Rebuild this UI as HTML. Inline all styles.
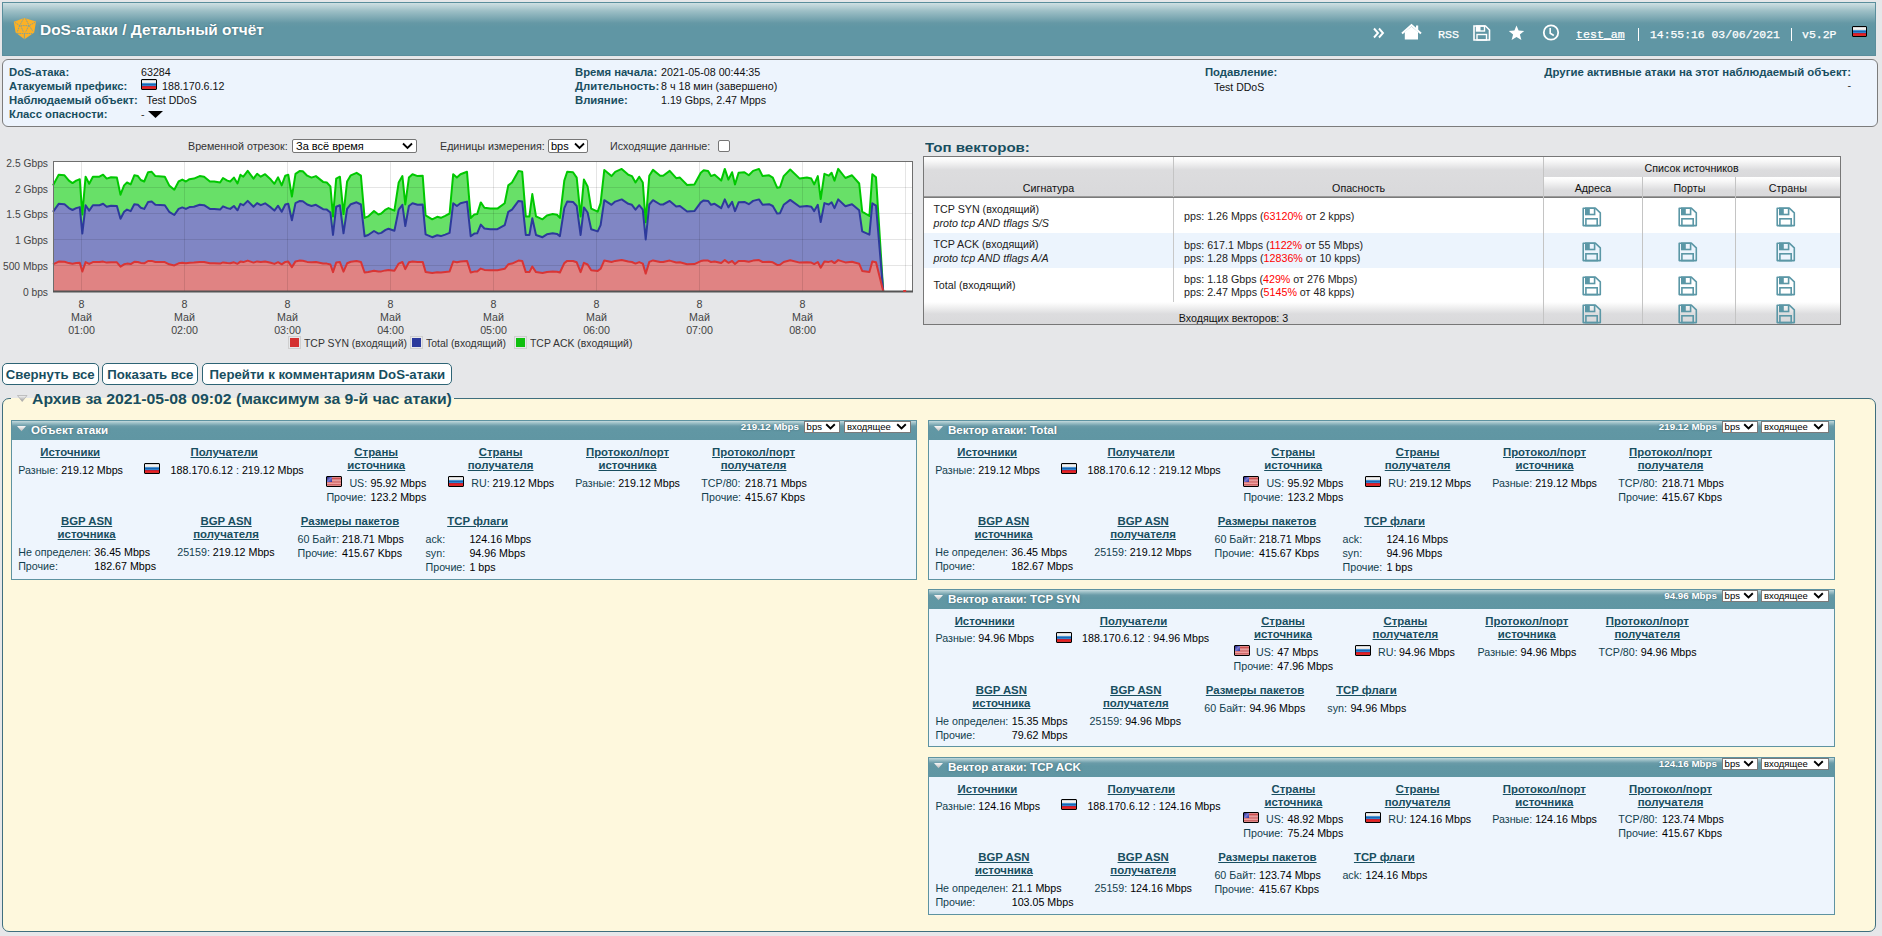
<!DOCTYPE html><html><head><meta charset='utf-8'><style>
html,body{margin:0;padding:0;}
body{width:1882px;height:936px;overflow:hidden;background:#e6e7e9;position:relative;font-family:"Liberation Sans",sans-serif;}
.t{position:absolute;white-space:nowrap;line-height:1;color:#2e2e2e;}
.h{color:#184e60;font-weight:bold;text-decoration:underline;text-underline-offset:1px;}
.lb{color:#184e60;font-weight:bold;}
.w{color:#fff;font-weight:bold;text-shadow:0 0 2px rgba(40,70,80,.6);}
.mono{font-family:"Liberation Mono",monospace;color:#fff;-webkit-text-stroke:0.25px #fff;}
svg{position:absolute;overflow:visible;}
</style></head><body><div style="position:absolute;left:2px;top:2px;width:1872px;height:52px;border:1px solid #5a8e9c;background:linear-gradient(#cfe0e3 0px,#9dbfc6 8px,#6598a5 20px,#6096a4 24px,#6096a4 100%);"></div>
<svg style="left:13px;top:17px" width="24" height="23" viewBox="0 0 24 23">
<polygon points="0.8,4.8 11.4,1 23,4.6 21.2,15.4 11.5,22.3 2.6,15.4" fill="#fdb125"/>
<g stroke="#7aa0a0" stroke-width="0.9" fill="none" stroke-dasharray="1.6 0.7">
<path d="M1.9,5.4 L6.6,8.6 L16.1,8.6 L22.3,5.2"/><path d="M10.6,1.5 L6.6,8.6 M12.5,1.5 L16.1,8.6"/>
<path d="M6.6,8.6 L4.1,15.4 M7.8,9 L10.6,15.4 M15.5,9 L12.5,15.4 M16.1,8.6 L20.1,14.6"/><path d="M4.1,16.5 L19,16.5"/><path d="M11.4,16.8 L11.4,22.3" stroke-dasharray="none"/>
</g></svg>
<div class="t w" style="left:40.0px;top:22.9px;font-size:14.2px;font-weight:bold;transform:scaleX(1.088);transform-origin:0 0;">DoS-атаки / Детальный отчёт</div>
<svg style="left:1373px;top:27px" width="12" height="12" viewBox="0 0 12 12">
<path d="M1,1.5 L5,6 L1,10.5 M6,1.5 L10,6 L6,10.5" stroke="#fff" stroke-width="1.9" fill="none"/></svg>
<svg style="left:1401px;top:24px" width="21" height="16" viewBox="0 0 21 16">
<path d="M1,9.5 L10.5,1 L20,9.5" stroke="#fff" stroke-width="2" fill="none"/>
<path d="M3.8,8 L10.5,2.5 L17,8 L17,15.5 L3.8,15.5 Z" fill="#fff"/><rect x="15" y="1.5" width="2.2" height="5" fill="#fff"/></svg>
<div class="t mono" style="left:1438.0px;top:30.0px;font-size:11.4px;transform:scaleX(1.03);transform-origin:0 0;">RSS</div>
<svg style="left:1473px;top:25px" width="18" height="16" viewBox="0 0 18 16">
<path d="M1,1 H12.5 L16.5,5 V15 H1 Z" stroke="#fff" stroke-width="1.6" fill="none"/>
<rect x="3.5" y="1" width="8" height="5" stroke="#fff" stroke-width="1.4" fill="none"/><rect x="3.5" y="1" width="4" height="5" fill="#fff"/>
<rect x="4" y="9.5" width="9.5" height="5.5" stroke="#fff" stroke-width="1.4" fill="none"/></svg>
<svg style="left:1508px;top:25px" width="17" height="16" viewBox="0 0 17 16">
<polygon points="8.5,0.6 10.6,5.6 16.2,5.9 11.9,9.5 13.4,15 8.5,11.9 3.6,15 5.1,9.5 0.8,5.9 6.4,5.6" fill="#fff"/></svg>
<svg style="left:1542px;top:24px" width="18" height="17" viewBox="0 0 18 17">
<circle cx="9" cy="8.5" r="7.2" stroke="#fff" stroke-width="1.8" fill="none"/>
<path d="M8.2,4 V9.2 L11.8,11.5" stroke="#fff" stroke-width="1.6" fill="none"/></svg>
<div class="t mono" style="left:1576.0px;top:30.0px;font-size:11.4px;transform:scaleX(1.02);transform-origin:0 0;"><span style="text-decoration:underline">test_am</span></div>
<div class="t mono" style="left:1650.0px;top:30.0px;font-size:11.4px;">14:55:16 03/06/2021</div>
<div class="t mono" style="left:1802.0px;top:30.0px;font-size:11.4px;transform:scaleX(1.01);transform-origin:0 0;">v5.2P</div>
<div style="position:absolute;left:1637.5px;top:28px;width:1.2px;height:13px;background:#fff;"></div>
<div style="position:absolute;left:1790.5px;top:28px;width:1.2px;height:13px;background:#fff;"></div>
<div style="position:absolute;left:1852px;top:26px;width:13px;height:9px;border:1px solid #000;border-radius:1px;background:linear-gradient(#b8b8b8 0%,#f8f8f8 12%,#e6e6e6 28%,#5aa0dc 36%,#0d5eae 52%,#3f8fd6 64%,#b02040 69%,#e41818 82%,#ff4a4a 90%,#9a0808 100%);"></div>
<div style="position:absolute;left:2px;top:59px;width:1874px;height:66px;border:1px solid #7c7c7c;border-radius:6px;background:#edf4fd;"></div>
<div class="t lb" style="left:9.0px;top:67.0px;font-size:11.3px;">DoS-атака:</div>
<div class="t lb" style="left:9.0px;top:81.0px;font-size:11.3px;">Атакуемый префикс:</div>
<div class="t lb" style="left:9.0px;top:95.0px;font-size:11.3px;">Наблюдаемый объект:</div>
<div class="t lb" style="left:9.0px;top:109.0px;font-size:11.3px;">Класс опасности:</div>
<div class="t" style="left:141.0px;top:67.0px;font-size:10.7px;color:#111;">63284</div>
<div style="position:absolute;left:141px;top:79px;width:14px;height:9px;border:1px solid #000;border-radius:1px;background:linear-gradient(#b8b8b8 0%,#f8f8f8 12%,#e6e6e6 28%,#5aa0dc 36%,#0d5eae 52%,#3f8fd6 64%,#b02040 69%,#e41818 82%,#ff4a4a 90%,#9a0808 100%);"></div>
<div class="t" style="left:162.0px;top:81.0px;font-size:10.7px;color:#111;">188.170.6.12</div>
<div class="t" style="left:146.5px;top:95.0px;font-size:10.5px;color:#111;">Test DDoS</div>
<div class="t" style="left:141.0px;top:109.0px;font-size:10.7px;">-</div>
<svg style="left:148px;top:111px" width="15" height="8"><polygon points="0,0 15,0 7.5,7" fill="#000"/></svg>
<div class="t lb" style="left:575.0px;top:66.5px;font-size:11.3px;">Время начала:</div>
<div class="t" style="left:661.0px;top:66.6px;font-size:10.7px;color:#111;">2021-05-08 00:44:35</div>
<div class="t lb" style="left:575.0px;top:80.7px;font-size:11.3px;">Длительность:</div>
<div class="t" style="left:661.0px;top:80.7px;font-size:10.7px;color:#111;">8 ч 18 мин (завершено)</div>
<div class="t lb" style="left:575.0px;top:94.7px;font-size:11.3px;">Влияние:</div>
<div class="t" style="left:661.0px;top:94.7px;font-size:10.7px;color:#111;">1.19 Gbps, 2.47 Mpps</div>
<div class="t lb" style="left:1205.0px;top:66.5px;font-size:11.3px;">Подавление:</div>
<div class="t" style="left:1214.0px;top:81.5px;font-size:10.5px;color:#111;">Test DDoS</div>
<div class="t lb" style="left:1851.0px;top:66.7px;font-size:11.3px;transform:translateX(-100%) scaleX(1.01);transform-origin:100% 0;">Другие активные атаки на этот наблюдаемый объект:</div>
<div class="t" style="left:1851.0px;top:80.0px;font-size:10.7px;transform:translateX(-100%);transform-origin:100% 0;">-</div>
<div class="t" style="left:188.0px;top:141.0px;font-size:10.7px;color:#333;">Временной отрезок:</div>
<div style="position:absolute;left:292px;top:139px;width:123px;height:12px;border:1px solid #767676;border-radius:2px;background:#fff;"></div>
<div class="t" style="left:296.0px;top:140.9px;font-size:11px;color:#000;">За всё время</div>
<svg style="left:402px;top:142px" width="11" height="8"><path d="M1,1.5 L5.5,6 L10,1.5" stroke="#000" stroke-width="1.8" fill="none"/></svg>
<div class="t" style="left:440.0px;top:141.0px;font-size:10.7px;color:#333;">Единицы измерения:</div>
<div style="position:absolute;left:548px;top:139px;width:38px;height:12px;border:1px solid #767676;border-radius:2px;background:#fff;"></div>
<div class="t" style="left:551.0px;top:140.9px;font-size:11px;color:#000;">bps</div>
<svg style="left:574px;top:142px" width="11" height="8"><path d="M1,1.5 L5.5,6 L10,1.5" stroke="#000" stroke-width="1.8" fill="none"/></svg>
<div class="t" style="left:610.0px;top:141.0px;font-size:10.7px;color:#333;">Исходящие данные:</div>
<div style="position:absolute;left:718px;top:140px;width:10px;height:10px;border:1px solid #767676;border-radius:2px;background:#fff;"></div>
<svg style="left:0;top:0" width="1882" height="936" viewBox="0 0 1882 936"><rect x="53" y="161" width="860" height="130" fill="#fff"/><path d="M53.0,185.4 L58.7,174.7 L64.5,175.3 L68.9,180.6 L72.5,183.1 L76.2,180.6 L79.8,179.2 L82.3,214.5 L85.6,176.7 L89.2,183.8 L92.9,176.7 L99.4,176.7 L103.1,174.7 L106.7,178.6 L111.0,177.3 L116.9,177.6 L120.5,194.7 L124.1,185.4 L127.0,182.5 L130.7,184.4 L134.3,175.3 L137.9,176.1 L140.8,180.0 L144.2,181.5 L148.1,172.2 L151.7,171.8 L155.4,176.1 L164.8,176.7 L169.2,185.4 L174.3,189.7 L178.6,181.5 L182.3,179.6 L185.9,181.5 L189.5,179.2 L193.9,178.6 L199.7,176.1 L204.1,176.7 L209.9,181.5 L214.2,181.5 L220.1,182.5 L223.0,178.0 L227.3,180.6 L230.2,181.5 L233.9,177.6 L237.5,183.5 L240.4,174.7 L243.3,176.7 L247.7,170.9 L253.5,178.6 L257.1,173.8 L260.8,176.7 L265.1,174.2 L270.8,179.6 L274.4,183.8 L278.1,177.3 L281.7,185.4 L285.3,175.7 L288.3,174.7 L291.9,196.6 L295.5,173.8 L299.9,170.9 L302.8,171.3 L307.2,175.7 L311.5,177.6 L315.9,176.1 L323.1,181.9 L326.8,182.5 L330.4,186.4 L333.0,216.4 L336.2,178.6 L339.9,176.7 L343.5,214.1 L347.1,181.5 L350.8,175.3 L356.6,172.8 L360.9,175.7 L364.6,217.9 L368.2,216.4 L374.0,211.0 L378.4,214.5 L381.3,213.5 L385.6,209.6 L388.5,208.1 L394.4,210.6 L398.7,182.5 L402.4,176.1 L405.3,204.4 L408.9,177.6 L412.5,174.2 L417.6,176.1 L422.7,175.7 L425.6,215.4 L432.2,219.3 L437.2,216.8 L440.9,217.8 L445.2,215.8 L449.6,213.5 L453.2,174.2 L456.9,177.6 L460.5,174.2 L467.0,171.8 L470.7,217.9 L474.3,214.5 L477.2,214.1 L480.8,202.4 L484.4,207.7 L490.2,208.6 L497.4,208.6 L504.7,203.2 L508.3,185.4 L512.0,182.5 L518.5,170.9 L522.2,171.8 L525.8,216.4 L529.4,216.4 L532.3,194.1 L536.0,216.4 L542.5,219.3 L546.9,215.4 L552.7,214.1 L557.0,214.8 L559.9,217.9 L564.3,180.6 L567.2,171.8 L573.0,172.2 L576.7,177.6 L580.6,216.4 L583.9,179.6 L587.6,186.4 L591.2,208.6 L597.7,211.6 L600.6,203.2 L604.3,169.9 L611.5,176.1 L615.2,171.8 L621.7,168.9 L628.3,174.7 L631.9,176.1 L635.5,182.5 L639.2,176.7 L642.8,182.5 L645.7,222.2 L649.3,175.7 L653.0,169.9 L660.2,175.7 L663.1,175.7 L669.7,170.9 L676.2,178.2 L679.9,177.6 L687.1,185.0 L694.4,184.4 L700.8,172.8 L703.7,170.3 L708.1,170.9 L711.0,176.1 L714.6,174.7 L721.2,180.6 L724.8,168.9 L728.4,179.6 L732.1,172.2 L735.0,184.4 L738.6,172.8 L744.4,172.2 L748.8,175.3 L753.1,170.9 L759.0,168.9 L762.6,176.1 L769.1,175.3 L772.8,177.6 L777.1,187.7 L780.0,187.3 L783.7,176.1 L790.2,169.5 L799.7,178.6 L806.9,177.6 L811.3,178.6 L814.2,184.4 L817.8,176.1 L820.7,199.0 L824.4,173.8 L828.7,175.7 L831.6,172.8 L834.5,180.6 L838.2,168.9 L845.4,178.0 L852.0,175.3 L859.2,183.5 L862.2,211.6 L869.4,216.0 L872.3,174.2 L876.0,177.3 L883.2,291 L53,291 Z" fill="#68e068"/><path d="M53.0,211.8 L58.7,203.8 L64.5,204.2 L68.9,208.1 L72.5,210.0 L76.2,208.1 L79.8,207.1 L82.3,233.6 L85.6,205.2 L89.2,210.6 L92.9,205.2 L99.4,205.2 L103.1,203.8 L106.7,206.7 L111.0,205.7 L116.9,206.0 L120.5,218.8 L124.1,211.8 L127.0,209.6 L130.7,211.1 L134.3,204.2 L137.9,204.8 L140.8,207.7 L144.2,208.9 L148.1,201.9 L151.7,201.6 L155.4,204.8 L164.8,205.2 L169.2,211.8 L174.3,215.0 L178.6,208.9 L182.3,207.4 L185.9,208.9 L189.5,207.1 L193.9,206.7 L199.7,204.8 L204.1,205.2 L209.9,208.9 L214.2,208.9 L220.1,209.6 L223.0,206.3 L227.3,208.1 L230.2,208.9 L233.9,206.0 L237.5,210.3 L240.4,203.8 L243.3,205.2 L247.7,200.9 L253.5,206.7 L257.1,203.1 L260.8,205.2 L265.1,203.3 L270.8,207.4 L274.4,210.6 L278.1,205.7 L281.7,211.8 L285.3,204.5 L288.3,203.8 L291.9,220.2 L295.5,203.1 L299.9,200.9 L302.8,201.2 L307.2,204.5 L311.5,206.0 L315.9,204.8 L323.1,209.2 L326.8,209.6 L330.4,212.5 L333.0,235.0 L336.2,206.7 L339.9,205.2 L343.5,233.3 L347.1,208.9 L350.8,204.2 L356.6,202.3 L360.9,204.5 L364.6,236.2 L368.2,235.0 L374.0,231.0 L378.4,233.6 L381.3,232.9 L385.6,229.9 L388.5,228.8 L394.4,230.7 L398.7,209.6 L402.4,204.8 L405.3,226.0 L408.9,206.0 L412.5,203.3 L417.6,204.8 L422.7,204.5 L425.6,234.3 L432.2,237.2 L437.2,235.3 L440.9,236.1 L445.2,234.6 L449.6,232.9 L453.2,203.3 L456.9,206.0 L460.5,203.3 L467.0,201.6 L470.7,236.2 L474.3,233.6 L477.2,233.3 L480.8,224.6 L484.4,228.5 L490.2,229.2 L497.4,229.2 L504.7,225.2 L508.3,211.8 L512.0,209.6 L518.5,200.9 L522.2,201.6 L525.8,235.0 L529.4,235.0 L532.3,218.3 L536.0,235.0 L542.5,237.2 L546.9,234.3 L552.7,233.3 L557.0,233.9 L559.9,236.2 L564.3,208.1 L567.2,201.6 L573.0,201.9 L576.7,206.0 L580.6,235.0 L583.9,207.4 L587.6,212.5 L591.2,229.2 L597.7,231.4 L600.6,225.2 L604.3,200.2 L611.5,204.8 L615.2,201.6 L621.7,199.4 L628.3,203.8 L631.9,204.8 L635.5,209.6 L639.2,205.2 L642.8,209.6 L645.7,239.4 L649.3,204.5 L653.0,200.2 L660.2,204.5 L663.1,204.5 L669.7,200.9 L676.2,206.4 L679.9,206.0 L687.1,211.5 L694.4,211.1 L700.8,202.3 L703.7,200.4 L708.1,200.9 L711.0,204.8 L714.6,203.8 L721.2,208.1 L724.8,199.4 L728.4,207.4 L732.1,201.9 L735.0,211.1 L738.6,202.3 L744.4,201.9 L748.8,204.2 L753.1,200.9 L759.0,199.4 L762.6,204.8 L769.1,204.2 L772.8,206.0 L777.1,213.5 L780.0,213.2 L783.7,204.8 L790.2,199.9 L799.7,206.7 L806.9,206.0 L811.3,206.7 L814.2,211.1 L817.8,204.8 L820.7,222.0 L824.4,203.1 L828.7,204.5 L831.6,202.3 L834.5,208.1 L838.2,199.4 L845.4,206.3 L852.0,204.2 L859.2,210.3 L862.2,231.4 L869.4,234.7 L872.3,203.3 L876.0,205.7 L883.2,291 L53,291 Z" fill="#8086c4"/><path d="M53.0,264.3 L58.7,261.6 L64.5,261.8 L68.9,263.1 L72.5,263.7 L76.2,263.1 L79.8,262.7 L82.3,271.6 L85.6,262.1 L89.2,263.9 L92.9,262.1 L99.4,262.1 L103.1,261.6 L106.7,262.6 L111.0,262.2 L116.9,262.3 L120.5,266.7 L124.1,264.3 L127.0,263.6 L130.7,264.1 L134.3,261.8 L137.9,262.0 L140.8,262.9 L144.2,263.3 L148.1,261.0 L151.7,260.9 L155.4,262.0 L164.8,262.1 L169.2,264.3 L174.3,265.4 L178.6,263.3 L182.3,262.8 L185.9,263.3 L189.5,262.7 L193.9,262.6 L199.7,262.0 L204.1,262.1 L209.9,263.3 L214.2,263.3 L220.1,263.6 L223.0,262.4 L227.3,263.1 L230.2,263.3 L233.9,262.3 L237.5,263.8 L240.4,261.6 L243.3,262.1 L247.7,260.6 L253.5,262.6 L257.1,261.4 L260.8,262.1 L265.1,261.5 L270.8,262.8 L274.4,263.9 L278.1,262.2 L281.7,264.3 L285.3,261.9 L288.3,261.6 L291.9,267.1 L295.5,261.4 L299.9,260.6 L302.8,260.7 L307.2,261.9 L311.5,262.3 L315.9,262.0 L323.1,263.4 L326.8,263.6 L330.4,264.5 L333.0,272.1 L336.2,262.6 L339.9,262.1 L343.5,271.6 L347.1,263.3 L350.8,261.8 L356.6,261.1 L360.9,261.9 L364.6,272.5 L368.2,272.1 L374.0,270.8 L378.4,271.6 L381.3,271.4 L385.6,270.4 L388.5,270.0 L394.4,270.7 L398.7,263.6 L402.4,262.0 L405.3,269.1 L408.9,262.3 L412.5,261.5 L417.6,262.0 L422.7,261.9 L425.6,271.9 L432.2,272.9 L437.2,272.2 L440.9,272.5 L445.2,272.0 L449.6,271.4 L453.2,261.5 L456.9,262.3 L460.5,261.5 L467.0,260.9 L470.7,272.5 L474.3,271.6 L477.2,271.6 L480.8,268.6 L484.4,269.9 L490.2,270.2 L497.4,270.2 L504.7,268.8 L508.3,264.3 L512.0,263.6 L518.5,260.6 L522.2,260.9 L525.8,272.1 L529.4,272.1 L532.3,266.5 L536.0,272.1 L542.5,272.9 L546.9,271.9 L552.7,271.6 L557.0,271.7 L559.9,272.5 L564.3,263.1 L567.2,260.9 L573.0,261.0 L576.7,262.3 L580.6,272.1 L583.9,262.8 L587.6,264.5 L591.2,270.2 L597.7,270.9 L600.6,268.8 L604.3,260.4 L611.5,262.0 L615.2,260.9 L621.7,260.1 L628.3,261.6 L631.9,262.0 L635.5,263.6 L639.2,262.1 L642.8,263.6 L645.7,273.6 L649.3,261.9 L653.0,260.4 L660.2,261.9 L663.1,261.9 L669.7,260.6 L676.2,262.5 L679.9,262.3 L687.1,264.2 L694.4,264.1 L700.8,261.1 L703.7,260.5 L708.1,260.6 L711.0,262.0 L714.6,261.6 L721.2,263.1 L724.8,260.1 L728.4,262.8 L732.1,261.0 L735.0,264.1 L738.6,261.1 L744.4,261.0 L748.8,261.8 L753.1,260.6 L759.0,260.1 L762.6,262.0 L769.1,261.8 L772.8,262.3 L777.1,264.9 L780.0,264.8 L783.7,262.0 L790.2,260.3 L799.7,262.6 L806.9,262.3 L811.3,262.6 L814.2,264.1 L817.8,262.0 L820.7,267.7 L824.4,261.4 L828.7,261.9 L831.6,261.1 L834.5,263.1 L838.2,260.1 L845.4,262.4 L852.0,261.8 L859.2,263.8 L862.2,270.9 L869.4,272.0 L872.3,261.5 L876.0,262.2 L883.2,291 L53,291 Z" fill="#e08383"/><path d="M53,187.5 H913 M53,213.5 H913 M53,239.5 H913 M53,265.5 H913 M81.5,161 V291 M184.5,161 V291 M287.5,161 V291 M390.5,161 V291 M493.5,161 V291 M596.5,161 V291 M699.5,161 V291 M802.5,161 V291 M905.5,161 V291" stroke="rgba(0,0,0,0.1)" stroke-width="1" fill="none"/><path d="M53.0,185.4 L58.7,174.7 L64.5,175.3 L68.9,180.6 L72.5,183.1 L76.2,180.6 L79.8,179.2 L82.3,214.5 L85.6,176.7 L89.2,183.8 L92.9,176.7 L99.4,176.7 L103.1,174.7 L106.7,178.6 L111.0,177.3 L116.9,177.6 L120.5,194.7 L124.1,185.4 L127.0,182.5 L130.7,184.4 L134.3,175.3 L137.9,176.1 L140.8,180.0 L144.2,181.5 L148.1,172.2 L151.7,171.8 L155.4,176.1 L164.8,176.7 L169.2,185.4 L174.3,189.7 L178.6,181.5 L182.3,179.6 L185.9,181.5 L189.5,179.2 L193.9,178.6 L199.7,176.1 L204.1,176.7 L209.9,181.5 L214.2,181.5 L220.1,182.5 L223.0,178.0 L227.3,180.6 L230.2,181.5 L233.9,177.6 L237.5,183.5 L240.4,174.7 L243.3,176.7 L247.7,170.9 L253.5,178.6 L257.1,173.8 L260.8,176.7 L265.1,174.2 L270.8,179.6 L274.4,183.8 L278.1,177.3 L281.7,185.4 L285.3,175.7 L288.3,174.7 L291.9,196.6 L295.5,173.8 L299.9,170.9 L302.8,171.3 L307.2,175.7 L311.5,177.6 L315.9,176.1 L323.1,181.9 L326.8,182.5 L330.4,186.4 L333.0,216.4 L336.2,178.6 L339.9,176.7 L343.5,214.1 L347.1,181.5 L350.8,175.3 L356.6,172.8 L360.9,175.7 L364.6,217.9 L368.2,216.4 L374.0,211.0 L378.4,214.5 L381.3,213.5 L385.6,209.6 L388.5,208.1 L394.4,210.6 L398.7,182.5 L402.4,176.1 L405.3,204.4 L408.9,177.6 L412.5,174.2 L417.6,176.1 L422.7,175.7 L425.6,215.4 L432.2,219.3 L437.2,216.8 L440.9,217.8 L445.2,215.8 L449.6,213.5 L453.2,174.2 L456.9,177.6 L460.5,174.2 L467.0,171.8 L470.7,217.9 L474.3,214.5 L477.2,214.1 L480.8,202.4 L484.4,207.7 L490.2,208.6 L497.4,208.6 L504.7,203.2 L508.3,185.4 L512.0,182.5 L518.5,170.9 L522.2,171.8 L525.8,216.4 L529.4,216.4 L532.3,194.1 L536.0,216.4 L542.5,219.3 L546.9,215.4 L552.7,214.1 L557.0,214.8 L559.9,217.9 L564.3,180.6 L567.2,171.8 L573.0,172.2 L576.7,177.6 L580.6,216.4 L583.9,179.6 L587.6,186.4 L591.2,208.6 L597.7,211.6 L600.6,203.2 L604.3,169.9 L611.5,176.1 L615.2,171.8 L621.7,168.9 L628.3,174.7 L631.9,176.1 L635.5,182.5 L639.2,176.7 L642.8,182.5 L645.7,222.2 L649.3,175.7 L653.0,169.9 L660.2,175.7 L663.1,175.7 L669.7,170.9 L676.2,178.2 L679.9,177.6 L687.1,185.0 L694.4,184.4 L700.8,172.8 L703.7,170.3 L708.1,170.9 L711.0,176.1 L714.6,174.7 L721.2,180.6 L724.8,168.9 L728.4,179.6 L732.1,172.2 L735.0,184.4 L738.6,172.8 L744.4,172.2 L748.8,175.3 L753.1,170.9 L759.0,168.9 L762.6,176.1 L769.1,175.3 L772.8,177.6 L777.1,187.7 L780.0,187.3 L783.7,176.1 L790.2,169.5 L799.7,178.6 L806.9,177.6 L811.3,178.6 L814.2,184.4 L817.8,176.1 L820.7,199.0 L824.4,173.8 L828.7,175.7 L831.6,172.8 L834.5,180.6 L838.2,168.9 L845.4,178.0 L852.0,175.3 L859.2,183.5 L862.2,211.6 L869.4,216.0 L872.3,174.2 L876.0,177.3 L883.2,291" stroke="#00c800" stroke-width="2" fill="none" stroke-linejoin="round"/><path d="M53.0,211.8 L58.7,203.8 L64.5,204.2 L68.9,208.1 L72.5,210.0 L76.2,208.1 L79.8,207.1 L82.3,233.6 L85.6,205.2 L89.2,210.6 L92.9,205.2 L99.4,205.2 L103.1,203.8 L106.7,206.7 L111.0,205.7 L116.9,206.0 L120.5,218.8 L124.1,211.8 L127.0,209.6 L130.7,211.1 L134.3,204.2 L137.9,204.8 L140.8,207.7 L144.2,208.9 L148.1,201.9 L151.7,201.6 L155.4,204.8 L164.8,205.2 L169.2,211.8 L174.3,215.0 L178.6,208.9 L182.3,207.4 L185.9,208.9 L189.5,207.1 L193.9,206.7 L199.7,204.8 L204.1,205.2 L209.9,208.9 L214.2,208.9 L220.1,209.6 L223.0,206.3 L227.3,208.1 L230.2,208.9 L233.9,206.0 L237.5,210.3 L240.4,203.8 L243.3,205.2 L247.7,200.9 L253.5,206.7 L257.1,203.1 L260.8,205.2 L265.1,203.3 L270.8,207.4 L274.4,210.6 L278.1,205.7 L281.7,211.8 L285.3,204.5 L288.3,203.8 L291.9,220.2 L295.5,203.1 L299.9,200.9 L302.8,201.2 L307.2,204.5 L311.5,206.0 L315.9,204.8 L323.1,209.2 L326.8,209.6 L330.4,212.5 L333.0,235.0 L336.2,206.7 L339.9,205.2 L343.5,233.3 L347.1,208.9 L350.8,204.2 L356.6,202.3 L360.9,204.5 L364.6,236.2 L368.2,235.0 L374.0,231.0 L378.4,233.6 L381.3,232.9 L385.6,229.9 L388.5,228.8 L394.4,230.7 L398.7,209.6 L402.4,204.8 L405.3,226.0 L408.9,206.0 L412.5,203.3 L417.6,204.8 L422.7,204.5 L425.6,234.3 L432.2,237.2 L437.2,235.3 L440.9,236.1 L445.2,234.6 L449.6,232.9 L453.2,203.3 L456.9,206.0 L460.5,203.3 L467.0,201.6 L470.7,236.2 L474.3,233.6 L477.2,233.3 L480.8,224.6 L484.4,228.5 L490.2,229.2 L497.4,229.2 L504.7,225.2 L508.3,211.8 L512.0,209.6 L518.5,200.9 L522.2,201.6 L525.8,235.0 L529.4,235.0 L532.3,218.3 L536.0,235.0 L542.5,237.2 L546.9,234.3 L552.7,233.3 L557.0,233.9 L559.9,236.2 L564.3,208.1 L567.2,201.6 L573.0,201.9 L576.7,206.0 L580.6,235.0 L583.9,207.4 L587.6,212.5 L591.2,229.2 L597.7,231.4 L600.6,225.2 L604.3,200.2 L611.5,204.8 L615.2,201.6 L621.7,199.4 L628.3,203.8 L631.9,204.8 L635.5,209.6 L639.2,205.2 L642.8,209.6 L645.7,239.4 L649.3,204.5 L653.0,200.2 L660.2,204.5 L663.1,204.5 L669.7,200.9 L676.2,206.4 L679.9,206.0 L687.1,211.5 L694.4,211.1 L700.8,202.3 L703.7,200.4 L708.1,200.9 L711.0,204.8 L714.6,203.8 L721.2,208.1 L724.8,199.4 L728.4,207.4 L732.1,201.9 L735.0,211.1 L738.6,202.3 L744.4,201.9 L748.8,204.2 L753.1,200.9 L759.0,199.4 L762.6,204.8 L769.1,204.2 L772.8,206.0 L777.1,213.5 L780.0,213.2 L783.7,204.8 L790.2,199.9 L799.7,206.7 L806.9,206.0 L811.3,206.7 L814.2,211.1 L817.8,204.8 L820.7,222.0 L824.4,203.1 L828.7,204.5 L831.6,202.3 L834.5,208.1 L838.2,199.4 L845.4,206.3 L852.0,204.2 L859.2,210.3 L862.2,231.4 L869.4,234.7 L872.3,203.3 L876.0,205.7 L883.2,291" stroke="#2d3a9c" stroke-width="2" fill="none" stroke-linejoin="round"/><path d="M53.0,264.3 L58.7,261.6 L64.5,261.8 L68.9,263.1 L72.5,263.7 L76.2,263.1 L79.8,262.7 L82.3,271.6 L85.6,262.1 L89.2,263.9 L92.9,262.1 L99.4,262.1 L103.1,261.6 L106.7,262.6 L111.0,262.2 L116.9,262.3 L120.5,266.7 L124.1,264.3 L127.0,263.6 L130.7,264.1 L134.3,261.8 L137.9,262.0 L140.8,262.9 L144.2,263.3 L148.1,261.0 L151.7,260.9 L155.4,262.0 L164.8,262.1 L169.2,264.3 L174.3,265.4 L178.6,263.3 L182.3,262.8 L185.9,263.3 L189.5,262.7 L193.9,262.6 L199.7,262.0 L204.1,262.1 L209.9,263.3 L214.2,263.3 L220.1,263.6 L223.0,262.4 L227.3,263.1 L230.2,263.3 L233.9,262.3 L237.5,263.8 L240.4,261.6 L243.3,262.1 L247.7,260.6 L253.5,262.6 L257.1,261.4 L260.8,262.1 L265.1,261.5 L270.8,262.8 L274.4,263.9 L278.1,262.2 L281.7,264.3 L285.3,261.9 L288.3,261.6 L291.9,267.1 L295.5,261.4 L299.9,260.6 L302.8,260.7 L307.2,261.9 L311.5,262.3 L315.9,262.0 L323.1,263.4 L326.8,263.6 L330.4,264.5 L333.0,272.1 L336.2,262.6 L339.9,262.1 L343.5,271.6 L347.1,263.3 L350.8,261.8 L356.6,261.1 L360.9,261.9 L364.6,272.5 L368.2,272.1 L374.0,270.8 L378.4,271.6 L381.3,271.4 L385.6,270.4 L388.5,270.0 L394.4,270.7 L398.7,263.6 L402.4,262.0 L405.3,269.1 L408.9,262.3 L412.5,261.5 L417.6,262.0 L422.7,261.9 L425.6,271.9 L432.2,272.9 L437.2,272.2 L440.9,272.5 L445.2,272.0 L449.6,271.4 L453.2,261.5 L456.9,262.3 L460.5,261.5 L467.0,260.9 L470.7,272.5 L474.3,271.6 L477.2,271.6 L480.8,268.6 L484.4,269.9 L490.2,270.2 L497.4,270.2 L504.7,268.8 L508.3,264.3 L512.0,263.6 L518.5,260.6 L522.2,260.9 L525.8,272.1 L529.4,272.1 L532.3,266.5 L536.0,272.1 L542.5,272.9 L546.9,271.9 L552.7,271.6 L557.0,271.7 L559.9,272.5 L564.3,263.1 L567.2,260.9 L573.0,261.0 L576.7,262.3 L580.6,272.1 L583.9,262.8 L587.6,264.5 L591.2,270.2 L597.7,270.9 L600.6,268.8 L604.3,260.4 L611.5,262.0 L615.2,260.9 L621.7,260.1 L628.3,261.6 L631.9,262.0 L635.5,263.6 L639.2,262.1 L642.8,263.6 L645.7,273.6 L649.3,261.9 L653.0,260.4 L660.2,261.9 L663.1,261.9 L669.7,260.6 L676.2,262.5 L679.9,262.3 L687.1,264.2 L694.4,264.1 L700.8,261.1 L703.7,260.5 L708.1,260.6 L711.0,262.0 L714.6,261.6 L721.2,263.1 L724.8,260.1 L728.4,262.8 L732.1,261.0 L735.0,264.1 L738.6,261.1 L744.4,261.0 L748.8,261.8 L753.1,260.6 L759.0,260.1 L762.6,262.0 L769.1,261.8 L772.8,262.3 L777.1,264.9 L780.0,264.8 L783.7,262.0 L790.2,260.3 L799.7,262.6 L806.9,262.3 L811.3,262.6 L814.2,264.1 L817.8,262.0 L820.7,267.7 L824.4,261.4 L828.7,261.9 L831.6,261.1 L834.5,263.1 L838.2,260.1 L845.4,262.4 L852.0,261.8 L859.2,263.8 L862.2,270.9 L869.4,272.0 L872.3,261.5 L876.0,262.2 L883.2,291" stroke="#d93535" stroke-width="2" fill="none" stroke-linejoin="round"/><path d="M53.5,161 V291 M53,161.5 H913 M912.5,161 V291" stroke="#6e6e6e" stroke-width="1" fill="none"/><path d="M53,291.5 H913" stroke="#555" stroke-width="2" fill="none"/><rect x="903.2" y="290" width="3" height="2" fill="#d93535"/></svg>
<div class="t" style="left:48.0px;top:158.0px;font-size:10.7px;color:#444;transform:translateX(-100%) scaleX(0.96);transform-origin:100% 0;">2.5 Gbps</div>
<div class="t" style="left:48.0px;top:183.7px;font-size:10.7px;color:#444;transform:translateX(-100%) scaleX(0.96);transform-origin:100% 0;">2 Gbps</div>
<div class="t" style="left:48.0px;top:209.4px;font-size:10.7px;color:#444;transform:translateX(-100%) scaleX(0.96);transform-origin:100% 0;">1.5 Gbps</div>
<div class="t" style="left:48.0px;top:235.1px;font-size:10.7px;color:#444;transform:translateX(-100%) scaleX(0.96);transform-origin:100% 0;">1 Gbps</div>
<div class="t" style="left:48.0px;top:260.8px;font-size:10.7px;color:#444;transform:translateX(-100%) scaleX(0.96);transform-origin:100% 0;">500 Mbps</div>
<div class="t" style="left:48.0px;top:286.5px;font-size:10.7px;color:#444;transform:translateX(-100%) scaleX(0.96);transform-origin:100% 0;">0 bps</div>
<div class="t" style="left:81.5px;top:299.0px;font-size:10.7px;color:#444;transform:translateX(-50%);transform-origin:50% 0;">8</div>
<div class="t" style="left:81.5px;top:312.0px;font-size:10.7px;color:#444;transform:translateX(-50%);transform-origin:50% 0;">Май</div>
<div class="t" style="left:81.5px;top:325.0px;font-size:10.7px;color:#444;transform:translateX(-50%);transform-origin:50% 0;">01:00</div>
<div class="t" style="left:184.5px;top:299.0px;font-size:10.7px;color:#444;transform:translateX(-50%);transform-origin:50% 0;">8</div>
<div class="t" style="left:184.5px;top:312.0px;font-size:10.7px;color:#444;transform:translateX(-50%);transform-origin:50% 0;">Май</div>
<div class="t" style="left:184.5px;top:325.0px;font-size:10.7px;color:#444;transform:translateX(-50%);transform-origin:50% 0;">02:00</div>
<div class="t" style="left:287.5px;top:299.0px;font-size:10.7px;color:#444;transform:translateX(-50%);transform-origin:50% 0;">8</div>
<div class="t" style="left:287.5px;top:312.0px;font-size:10.7px;color:#444;transform:translateX(-50%);transform-origin:50% 0;">Май</div>
<div class="t" style="left:287.5px;top:325.0px;font-size:10.7px;color:#444;transform:translateX(-50%);transform-origin:50% 0;">03:00</div>
<div class="t" style="left:390.5px;top:299.0px;font-size:10.7px;color:#444;transform:translateX(-50%);transform-origin:50% 0;">8</div>
<div class="t" style="left:390.5px;top:312.0px;font-size:10.7px;color:#444;transform:translateX(-50%);transform-origin:50% 0;">Май</div>
<div class="t" style="left:390.5px;top:325.0px;font-size:10.7px;color:#444;transform:translateX(-50%);transform-origin:50% 0;">04:00</div>
<div class="t" style="left:493.5px;top:299.0px;font-size:10.7px;color:#444;transform:translateX(-50%);transform-origin:50% 0;">8</div>
<div class="t" style="left:493.5px;top:312.0px;font-size:10.7px;color:#444;transform:translateX(-50%);transform-origin:50% 0;">Май</div>
<div class="t" style="left:493.5px;top:325.0px;font-size:10.7px;color:#444;transform:translateX(-50%);transform-origin:50% 0;">05:00</div>
<div class="t" style="left:596.5px;top:299.0px;font-size:10.7px;color:#444;transform:translateX(-50%);transform-origin:50% 0;">8</div>
<div class="t" style="left:596.5px;top:312.0px;font-size:10.7px;color:#444;transform:translateX(-50%);transform-origin:50% 0;">Май</div>
<div class="t" style="left:596.5px;top:325.0px;font-size:10.7px;color:#444;transform:translateX(-50%);transform-origin:50% 0;">06:00</div>
<div class="t" style="left:699.5px;top:299.0px;font-size:10.7px;color:#444;transform:translateX(-50%);transform-origin:50% 0;">8</div>
<div class="t" style="left:699.5px;top:312.0px;font-size:10.7px;color:#444;transform:translateX(-50%);transform-origin:50% 0;">Май</div>
<div class="t" style="left:699.5px;top:325.0px;font-size:10.7px;color:#444;transform:translateX(-50%);transform-origin:50% 0;">07:00</div>
<div class="t" style="left:802.5px;top:299.0px;font-size:10.7px;color:#444;transform:translateX(-50%);transform-origin:50% 0;">8</div>
<div class="t" style="left:802.5px;top:312.0px;font-size:10.7px;color:#444;transform:translateX(-50%);transform-origin:50% 0;">Май</div>
<div class="t" style="left:802.5px;top:325.0px;font-size:10.7px;color:#444;transform:translateX(-50%);transform-origin:50% 0;">08:00</div>
<div style="position:absolute;left:288px;top:336px;width:11px;height:11px;border:1px solid #cfcfcf;"></div>
<div style="position:absolute;left:290px;top:338px;width:9px;height:9px;background:#d43030;"></div>
<div class="t" style="left:304.0px;top:338.0px;font-size:10.7px;color:#333;transform:scaleX(0.975);transform-origin:0 0;">TCP SYN (входящий)</div>
<div style="position:absolute;left:410px;top:336px;width:11px;height:11px;border:1px solid #cfcfcf;"></div>
<div style="position:absolute;left:412px;top:338px;width:9px;height:9px;background:#2b3a9c;"></div>
<div class="t" style="left:426.0px;top:338.0px;font-size:10.7px;color:#333;transform:scaleX(0.975);transform-origin:0 0;">Total (входящий)</div>
<div style="position:absolute;left:514px;top:336px;width:11px;height:11px;border:1px solid #cfcfcf;"></div>
<div style="position:absolute;left:516px;top:338px;width:9px;height:9px;background:#0fbf0f;"></div>
<div class="t" style="left:530.0px;top:338.0px;font-size:10.7px;color:#333;transform:scaleX(0.975);transform-origin:0 0;">TCP ACK (входящий)</div>
<div class="t lb" style="left:925.0px;top:141.4px;font-size:13px;transform:scaleX(1.16);transform-origin:0 0;">Топ векторов:</div>
<div style="position:absolute;left:923px;top:156px;width:916px;height:167px;border:1px solid #777;background:#fff;"></div>
<div style="position:absolute;left:924px;top:157px;width:619px;height:40px;background:linear-gradient(#fff 0px,#f8f8f8 4px,#dcdcde 13px,#d9d9db 100%);"></div>
<div style="position:absolute;left:1544px;top:157px;width:296px;height:20px;background:linear-gradient(#fff 0px,#f8f8f8 4px,#dcdcde 13px,#d9d9db 100%);"></div>
<div style="position:absolute;left:1544px;top:177px;width:296px;height:20px;background:linear-gradient(#fff 0px,#f8f8f8 4px,#dcdcde 13px,#d9d9db 100%);"></div>
<div style="position:absolute;left:924px;top:197px;width:916px;height:1px;background:#7a7a7a;"></div>
<div style="position:absolute;left:924px;top:196px;width:916px;height:1px;background:#9a9a9a;"></div>
<div style="position:absolute;left:924px;top:233px;width:916px;height:35px;background:#ecf4fd;"></div>
<div style="position:absolute;left:924px;top:302px;width:916px;height:22px;background:linear-gradient(#fff 0px,#f4f4f4 4px,#dcdcde 12px,#d9d9db 100%);"></div>
<div style="position:absolute;left:1173px;top:157px;width:1px;height:40px;background:#c4c4c4;"></div>
<div style="position:absolute;left:1173px;top:198px;width:1px;height:104px;background:#c8c8c8;"></div>
<div style="position:absolute;left:1543px;top:157px;width:1px;height:167px;background:#c4c4c4;"></div>
<div style="position:absolute;left:1642px;top:177px;width:1px;height:147px;background:#c4c4c4;"></div>
<div style="position:absolute;left:1735px;top:177px;width:1px;height:147px;background:#c4c4c4;"></div>
<div class="t" style="left:1048.5px;top:183.0px;font-size:10.7px;color:#111;transform:translateX(-50%);transform-origin:50% 0;">Сигнатура</div>
<div class="t" style="left:1358.6px;top:183.0px;font-size:10.7px;color:#111;transform:translateX(-50%);transform-origin:50% 0;">Опасность</div>
<div class="t" style="left:1691.6px;top:163.3px;font-size:10.7px;color:#111;transform:translateX(-50%);transform-origin:50% 0;">Список источников</div>
<div class="t" style="left:1593.0px;top:183.0px;font-size:10.7px;color:#111;transform:translateX(-50%);transform-origin:50% 0;">Адреса</div>
<div class="t" style="left:1689.4px;top:183.0px;font-size:10.7px;color:#111;transform:translateX(-50%);transform-origin:50% 0;">Порты</div>
<div class="t" style="left:1787.8px;top:183.0px;font-size:10.7px;color:#111;transform:translateX(-50%);transform-origin:50% 0;">Страны</div>
<div class="t" style="left:933.5px;top:204.0px;font-size:10.7px;color:#222;">TCP SYN (входящий)</div>
<div class="t" style="left:933.5px;top:218.4px;font-size:10.7px;color:#222;font-style:italic;">proto tcp AND tflags S/S</div>
<div class="t" style="left:933.5px;top:239.0px;font-size:10.7px;color:#222;">TCP ACK (входящий)</div>
<div class="t" style="left:933.5px;top:253.2px;font-size:10.7px;color:#222;font-style:italic;">proto tcp AND tflags A/A</div>
<div class="t" style="left:933.5px;top:279.5px;font-size:10.7px;color:#222;">Total (входящий)</div>
<div class="t" style="left:1184.0px;top:210.5px;font-size:10.7px;color:#222;">pps: 1.26 Mpps (<span style="color:#f00">63120%</span> от 2 kpps)</div>
<div class="t" style="left:1184.0px;top:239.5px;font-size:10.7px;color:#222;">bps: 617.1 Mbps (<span style="color:#f00">1122%</span> от 55 Mbps)</div>
<div class="t" style="left:1184.0px;top:253.0px;font-size:10.7px;color:#222;">pps: 1.28 Mpps (<span style="color:#f00">12836%</span> от 10 kpps)</div>
<div class="t" style="left:1184.0px;top:273.8px;font-size:10.7px;color:#222;">bps: 1.18 Gbps (<span style="color:#f00">429%</span> от 276 Mbps)</div>
<div class="t" style="left:1184.0px;top:286.7px;font-size:10.7px;color:#222;">pps: 2.47 Mpps (<span style="color:#f00">5145%</span> от 48 kpps)</div>
<div class="t" style="left:1233.5px;top:313.0px;font-size:10.7px;color:#111;transform:translateX(-50%);transform-origin:50% 0;">Входящих векторов: 3</div>
<svg style="left:1582.3px;top:206.8px" width="20" height="20" viewBox="0 0 20 20">
<path d="M1.2,1.2 H13.3 L18.3,5.8 V18.6 H1.2 Z" stroke="#5b97a6" stroke-width="1.6" fill="none" stroke-linejoin="round"/>
<rect x="3.8" y="1.2" width="8.8" height="6.3" stroke="#5b97a6" stroke-width="1.6" fill="none"/>
<rect x="3.8" y="1.2" width="4" height="6.3" fill="#5b97a6"/>
<rect x="3.9" y="11.8" width="11.3" height="6.8" stroke="#5b97a6" stroke-width="1.6" fill="none"/></svg>
<svg style="left:1582.3px;top:241.8px" width="20" height="20" viewBox="0 0 20 20">
<path d="M1.2,1.2 H13.3 L18.3,5.8 V18.6 H1.2 Z" stroke="#5b97a6" stroke-width="1.6" fill="none" stroke-linejoin="round"/>
<rect x="3.8" y="1.2" width="8.8" height="6.3" stroke="#5b97a6" stroke-width="1.6" fill="none"/>
<rect x="3.8" y="1.2" width="4" height="6.3" fill="#5b97a6"/>
<rect x="3.9" y="11.8" width="11.3" height="6.8" stroke="#5b97a6" stroke-width="1.6" fill="none"/></svg>
<svg style="left:1582.3px;top:276.2px" width="20" height="20" viewBox="0 0 20 20">
<path d="M1.2,1.2 H13.3 L18.3,5.8 V18.6 H1.2 Z" stroke="#5b97a6" stroke-width="1.6" fill="none" stroke-linejoin="round"/>
<rect x="3.8" y="1.2" width="8.8" height="6.3" stroke="#5b97a6" stroke-width="1.6" fill="none"/>
<rect x="3.8" y="1.2" width="4" height="6.3" fill="#5b97a6"/>
<rect x="3.9" y="11.8" width="11.3" height="6.8" stroke="#5b97a6" stroke-width="1.6" fill="none"/></svg>
<svg style="left:1582.3px;top:303.6px" width="20" height="20" viewBox="0 0 20 20">
<path d="M1.2,1.2 H13.3 L18.3,5.8 V18.6 H1.2 Z" stroke="#5b97a6" stroke-width="1.6" fill="none" stroke-linejoin="round"/>
<rect x="3.8" y="1.2" width="8.8" height="6.3" stroke="#5b97a6" stroke-width="1.6" fill="none"/>
<rect x="3.8" y="1.2" width="4" height="6.3" fill="#5b97a6"/>
<rect x="3.9" y="11.8" width="11.3" height="6.8" stroke="#5b97a6" stroke-width="1.6" fill="none"/></svg>
<svg style="left:1678.4px;top:206.8px" width="20" height="20" viewBox="0 0 20 20">
<path d="M1.2,1.2 H13.3 L18.3,5.8 V18.6 H1.2 Z" stroke="#5b97a6" stroke-width="1.6" fill="none" stroke-linejoin="round"/>
<rect x="3.8" y="1.2" width="8.8" height="6.3" stroke="#5b97a6" stroke-width="1.6" fill="none"/>
<rect x="3.8" y="1.2" width="4" height="6.3" fill="#5b97a6"/>
<rect x="3.9" y="11.8" width="11.3" height="6.8" stroke="#5b97a6" stroke-width="1.6" fill="none"/></svg>
<svg style="left:1678.4px;top:241.8px" width="20" height="20" viewBox="0 0 20 20">
<path d="M1.2,1.2 H13.3 L18.3,5.8 V18.6 H1.2 Z" stroke="#5b97a6" stroke-width="1.6" fill="none" stroke-linejoin="round"/>
<rect x="3.8" y="1.2" width="8.8" height="6.3" stroke="#5b97a6" stroke-width="1.6" fill="none"/>
<rect x="3.8" y="1.2" width="4" height="6.3" fill="#5b97a6"/>
<rect x="3.9" y="11.8" width="11.3" height="6.8" stroke="#5b97a6" stroke-width="1.6" fill="none"/></svg>
<svg style="left:1678.4px;top:276.2px" width="20" height="20" viewBox="0 0 20 20">
<path d="M1.2,1.2 H13.3 L18.3,5.8 V18.6 H1.2 Z" stroke="#5b97a6" stroke-width="1.6" fill="none" stroke-linejoin="round"/>
<rect x="3.8" y="1.2" width="8.8" height="6.3" stroke="#5b97a6" stroke-width="1.6" fill="none"/>
<rect x="3.8" y="1.2" width="4" height="6.3" fill="#5b97a6"/>
<rect x="3.9" y="11.8" width="11.3" height="6.8" stroke="#5b97a6" stroke-width="1.6" fill="none"/></svg>
<svg style="left:1678.4px;top:303.6px" width="20" height="20" viewBox="0 0 20 20">
<path d="M1.2,1.2 H13.3 L18.3,5.8 V18.6 H1.2 Z" stroke="#5b97a6" stroke-width="1.6" fill="none" stroke-linejoin="round"/>
<rect x="3.8" y="1.2" width="8.8" height="6.3" stroke="#5b97a6" stroke-width="1.6" fill="none"/>
<rect x="3.8" y="1.2" width="4" height="6.3" fill="#5b97a6"/>
<rect x="3.9" y="11.8" width="11.3" height="6.8" stroke="#5b97a6" stroke-width="1.6" fill="none"/></svg>
<svg style="left:1776.4px;top:206.8px" width="20" height="20" viewBox="0 0 20 20">
<path d="M1.2,1.2 H13.3 L18.3,5.8 V18.6 H1.2 Z" stroke="#5b97a6" stroke-width="1.6" fill="none" stroke-linejoin="round"/>
<rect x="3.8" y="1.2" width="8.8" height="6.3" stroke="#5b97a6" stroke-width="1.6" fill="none"/>
<rect x="3.8" y="1.2" width="4" height="6.3" fill="#5b97a6"/>
<rect x="3.9" y="11.8" width="11.3" height="6.8" stroke="#5b97a6" stroke-width="1.6" fill="none"/></svg>
<svg style="left:1776.4px;top:241.8px" width="20" height="20" viewBox="0 0 20 20">
<path d="M1.2,1.2 H13.3 L18.3,5.8 V18.6 H1.2 Z" stroke="#5b97a6" stroke-width="1.6" fill="none" stroke-linejoin="round"/>
<rect x="3.8" y="1.2" width="8.8" height="6.3" stroke="#5b97a6" stroke-width="1.6" fill="none"/>
<rect x="3.8" y="1.2" width="4" height="6.3" fill="#5b97a6"/>
<rect x="3.9" y="11.8" width="11.3" height="6.8" stroke="#5b97a6" stroke-width="1.6" fill="none"/></svg>
<svg style="left:1776.4px;top:276.2px" width="20" height="20" viewBox="0 0 20 20">
<path d="M1.2,1.2 H13.3 L18.3,5.8 V18.6 H1.2 Z" stroke="#5b97a6" stroke-width="1.6" fill="none" stroke-linejoin="round"/>
<rect x="3.8" y="1.2" width="8.8" height="6.3" stroke="#5b97a6" stroke-width="1.6" fill="none"/>
<rect x="3.8" y="1.2" width="4" height="6.3" fill="#5b97a6"/>
<rect x="3.9" y="11.8" width="11.3" height="6.8" stroke="#5b97a6" stroke-width="1.6" fill="none"/></svg>
<svg style="left:1776.4px;top:303.6px" width="20" height="20" viewBox="0 0 20 20">
<path d="M1.2,1.2 H13.3 L18.3,5.8 V18.6 H1.2 Z" stroke="#5b97a6" stroke-width="1.6" fill="none" stroke-linejoin="round"/>
<rect x="3.8" y="1.2" width="8.8" height="6.3" stroke="#5b97a6" stroke-width="1.6" fill="none"/>
<rect x="3.8" y="1.2" width="4" height="6.3" fill="#5b97a6"/>
<rect x="3.9" y="11.8" width="11.3" height="6.8" stroke="#5b97a6" stroke-width="1.6" fill="none"/></svg>
<div style="position:absolute;left:2px;top:363px;width:94.5px;height:20px;border:1px solid #2d6475;border-radius:5px;background:#fff;"></div>
<div class="t lb" style="left:50.2px;top:367.7px;font-size:13.2px;transform:translateX(-50%);transform-origin:50% 0;">Свернуть все</div>
<div style="position:absolute;left:102.2px;top:363px;width:94.3px;height:20px;border:1px solid #2d6475;border-radius:5px;background:#fff;"></div>
<div class="t lb" style="left:150.3px;top:367.7px;font-size:13.2px;transform:translateX(-50%);transform-origin:50% 0;">Показать все</div>
<div style="position:absolute;left:202.4px;top:363px;width:247.9px;height:20px;border:1px solid #2d6475;border-radius:5px;background:#fff;"></div>
<div class="t lb" style="left:327.4px;top:367.7px;font-size:13.2px;transform:translateX(-50%);transform-origin:50% 0;">Перейти к комментариям DoS-атаки</div>
<div style="position:absolute;left:2px;top:398px;width:1872px;height:532px;border:1px solid #3f6f7e;border-radius:7px;background:#fef8dd;"></div>
<div style="position:absolute;left:11px;top:390px;width:443px;height:8px;background:#e6e7e9;"></div>
<div style="position:absolute;left:11px;top:398px;width:443px;height:3px;background:#fef8dd;"></div>
<svg style="left:17px;top:395px" width="11" height="7"><defs><linearGradient id="tg" x1="0" y1="0" x2="0" y2="1"><stop offset="0" stop-color="#f6f6f6"/><stop offset="1" stop-color="#9a9a9a"/></linearGradient></defs><polygon points="0.5,0.5 10,0.5 5.2,6.5" fill="url(#tg)" stroke="#aaaaaa" stroke-width="0.7"/></svg>
<div class="t lb" style="left:32.0px;top:392.1px;font-size:14px;transform:scaleX(1.127);transform-origin:0 0;">Архив за 2021-05-08 09:02 (максимум за 9-й час атаки)</div>
<div style="position:absolute;left:11px;top:420px;width:904px;height:158px;border:1px solid #5e93a1;background:#eef5fd;"></div>
<div style="position:absolute;left:12px;top:421px;width:904px;height:19px;background:linear-gradient(#c3d9dd 0px,#9dc0c7 2px,#6a9ba8 5px,#6197a4 8px,#6096a3 100%);"></div>
<svg style="left:16.5px;top:426px" width="10" height="6"><defs><linearGradient id="tg2" x1="0" y1="0" x2="0" y2="1"><stop offset="0" stop-color="#fafafa"/><stop offset="1" stop-color="#b8b8b8"/></linearGradient></defs><polygon points="0,0 9,0 4.5,5.3" fill="url(#tg2)"/></svg>
<div class="t w" style="left:30.5px;top:424.8px;font-size:10.5px;transform:scaleX(1.104);transform-origin:0 0;">Объект атаки</div>
<div class="t w" style="left:799.3px;top:422.1px;font-size:9.5px;transform:translateX(-100%) scaleX(1.03);transform-origin:100% 0;">219.12 Mbps</div>
<div style="position:absolute;left:803.8px;top:421.2px;width:34.2px;height:9.6px;border:1px solid #7a7a7a;background:#fff;"></div>
<div class="t" style="left:806.6px;top:422.2px;font-size:9.5px;color:#000;">bps</div>
<svg style="left:824.5px;top:423.2px" width="11" height="7"><path d="M1.2,1.2 L5.5,5.4 L9.8,1.2" stroke="#000" stroke-width="1.9" fill="none"/></svg>
<div style="position:absolute;left:844.2px;top:421.2px;width:65.2px;height:9.6px;border:1px solid #7a7a7a;background:#fff;"></div>
<div class="t" style="left:847.0px;top:422.2px;font-size:9.5px;color:#000;">входящее</div>
<svg style="left:895.9px;top:423.2px" width="11" height="7"><path d="M1.2,1.2 L5.5,5.4 L9.8,1.2" stroke="#000" stroke-width="1.9" fill="none"/></svg>
<div class="t h" style="left:70.2px;top:447.0px;font-size:11.4px;transform:translateX(-50%);transform-origin:50% 0;">Источники</div>
<div class="t h" style="left:224.2px;top:447.0px;font-size:11.4px;transform:translateX(-50%);transform-origin:50% 0;">Получатели</div>
<div class="t h" style="left:376.2px;top:447.0px;font-size:11.4px;transform:translateX(-50%);transform-origin:50% 0;">Страны</div>
<div class="t h" style="left:376.2px;top:460.2px;font-size:11.4px;transform:translateX(-50%);transform-origin:50% 0;">источника</div>
<div class="t h" style="left:500.6px;top:447.0px;font-size:11.4px;transform:translateX(-50%);transform-origin:50% 0;">Страны</div>
<div class="t h" style="left:500.6px;top:460.2px;font-size:11.4px;transform:translateX(-50%);transform-origin:50% 0;">получателя</div>
<div class="t h" style="left:627.5px;top:447.0px;font-size:11.4px;transform:translateX(-50%);transform-origin:50% 0;">Протокол/порт</div>
<div class="t h" style="left:627.5px;top:460.2px;font-size:11.4px;transform:translateX(-50%);transform-origin:50% 0;">источника</div>
<div class="t h" style="left:753.6px;top:447.0px;font-size:11.4px;transform:translateX(-50%);transform-origin:50% 0;">Протокол/порт</div>
<div class="t h" style="left:753.6px;top:460.2px;font-size:11.4px;transform:translateX(-50%);transform-origin:50% 0;">получателя</div>
<div class="t h" style="left:86.6px;top:515.8px;font-size:11.4px;transform:translateX(-50%);transform-origin:50% 0;">BGP ASN</div>
<div class="t h" style="left:86.6px;top:529.0px;font-size:11.4px;transform:translateX(-50%);transform-origin:50% 0;">источника</div>
<div class="t h" style="left:226.1px;top:515.8px;font-size:11.4px;transform:translateX(-50%);transform-origin:50% 0;">BGP ASN</div>
<div class="t h" style="left:226.1px;top:529.0px;font-size:11.4px;transform:translateX(-50%);transform-origin:50% 0;">получателя</div>
<div class="t h" style="left:350.0px;top:515.8px;font-size:11.4px;transform:translateX(-50%);transform-origin:50% 0;">Размеры пакетов</div>
<div class="t h" style="left:477.6px;top:515.8px;font-size:11.4px;transform:translateX(-50%);transform-origin:50% 0;">TCP флаги</div>
<div class="t" style="left:18.2px;top:464.8px;font-size:10.7px;"><span style="color:#123f4e">Разные:</span><span style="color:#000"> 219.12 Mbps</span></div>
<div style="position:absolute;left:144px;top:463px;width:14px;height:9px;border:1px solid #000;border-radius:1px;background:linear-gradient(#b8b8b8 0%,#f8f8f8 12%,#e6e6e6 28%,#5aa0dc 36%,#0d5eae 52%,#3f8fd6 64%,#b02040 69%,#e41818 82%,#ff4a4a 90%,#9a0808 100%);"></div>
<div class="t" style="left:170.6px;top:464.8px;font-size:10.7px;"><span style="color:#000">188.170.6.12</span><span style="color:#123f4e"> : </span><span style="color:#000">219.12 Mbps</span></div>
<div style="position:absolute;left:326px;top:476px;width:14px;height:9px;border:1px solid #000;border-radius:1px;background:linear-gradient(#e9a0a0 0%,#c84a4a 18%,#e9a8a8 35%,#d06a6a 55%,#f0a0a0 72%,#c05050 88%,#f4b4b4 100%);overflow:hidden"><div style="position:absolute;left:0;top:0;width:5px;height:5px;background:linear-gradient(135deg,#1e1e7a,#7a7ad0 50%,#2a2a9a);"></div></div>
<div class="t" style="left:349.4px;top:478.0px;font-size:10.7px;"><span style="color:#123f4e">US:</span><span style="color:#000"></span></div>
<div class="t" style="left:370.5px;top:478.0px;font-size:10.7px;"><span style="color:#000">95.92 Mbps</span></div>
<div class="t" style="left:326.4px;top:492.0px;font-size:10.7px;"><span style="color:#123f4e">Прочие:</span><span style="color:#000"></span></div>
<div class="t" style="left:370.5px;top:492.0px;font-size:10.7px;"><span style="color:#000">123.2 Mbps</span></div>
<div style="position:absolute;left:448px;top:476px;width:14px;height:9px;border:1px solid #000;border-radius:1px;background:linear-gradient(#b8b8b8 0%,#f8f8f8 12%,#e6e6e6 28%,#5aa0dc 36%,#0d5eae 52%,#3f8fd6 64%,#b02040 69%,#e41818 82%,#ff4a4a 90%,#9a0808 100%);"></div>
<div class="t" style="left:471.3px;top:478.0px;font-size:10.7px;"><span style="color:#123f4e">RU:</span><span style="color:#000"></span></div>
<div class="t" style="left:492.4px;top:478.0px;font-size:10.7px;"><span style="color:#000">219.12 Mbps</span></div>
<div class="t" style="left:575.2px;top:477.7px;font-size:10.7px;"><span style="color:#123f4e">Разные:</span><span style="color:#000"> 219.12 Mbps</span></div>
<div class="t" style="left:701.3px;top:477.7px;font-size:10.7px;"><span style="color:#123f4e">TCP/80:</span><span style="color:#000"></span></div>
<div class="t" style="left:745.0px;top:477.7px;font-size:10.7px;"><span style="color:#000">218.71 Mbps</span></div>
<div class="t" style="left:701.3px;top:491.5px;font-size:10.7px;"><span style="color:#123f4e">Прочие:</span><span style="color:#000"></span></div>
<div class="t" style="left:745.0px;top:491.5px;font-size:10.7px;"><span style="color:#000">415.67 Kbps</span></div>
<div class="t" style="left:18.2px;top:547.0px;font-size:10.7px;"><span style="color:#123f4e">Не определен:</span><span style="color:#000"></span></div>
<div class="t" style="left:94.3px;top:547.0px;font-size:10.7px;"><span style="color:#000">36.45 Mbps</span></div>
<div class="t" style="left:18.2px;top:561.0px;font-size:10.7px;"><span style="color:#123f4e">Прочие:</span><span style="color:#000"></span></div>
<div class="t" style="left:94.3px;top:561.0px;font-size:10.7px;"><span style="color:#000">182.67 Mbps</span></div>
<div class="t" style="left:177.2px;top:547.0px;font-size:10.7px;"><span style="color:#123f4e">25159:</span><span style="color:#000"> 219.12 Mbps</span></div>
<div class="t" style="left:297.5px;top:534.0px;font-size:10.7px;"><span style="color:#123f4e">60 Байт:</span><span style="color:#000"></span></div>
<div class="t" style="left:342.0px;top:534.0px;font-size:10.7px;"><span style="color:#000">218.71 Mbps</span></div>
<div class="t" style="left:297.5px;top:548.0px;font-size:10.7px;"><span style="color:#123f4e">Прочие:</span><span style="color:#000"></span></div>
<div class="t" style="left:342.0px;top:548.0px;font-size:10.7px;"><span style="color:#000">415.67 Kbps</span></div>
<div class="t" style="left:425.5px;top:534.0px;font-size:10.7px;"><span style="color:#123f4e">ack:</span><span style="color:#000"></span></div>
<div class="t" style="left:469.4px;top:534.0px;font-size:10.7px;"><span style="color:#000">124.16 Mbps</span></div>
<div class="t" style="left:425.5px;top:548.0px;font-size:10.7px;"><span style="color:#123f4e">syn:</span><span style="color:#000"></span></div>
<div class="t" style="left:469.4px;top:548.0px;font-size:10.7px;"><span style="color:#000">94.96 Mbps</span></div>
<div class="t" style="left:425.5px;top:562.0px;font-size:10.7px;"><span style="color:#123f4e">Прочие:</span><span style="color:#000"></span></div>
<div class="t" style="left:469.4px;top:562.0px;font-size:10.7px;"><span style="color:#000">1 bps</span></div>
<div style="position:absolute;left:928px;top:420px;width:905px;height:158px;border:1px solid #5e93a1;background:#eef5fd;"></div>
<div style="position:absolute;left:929px;top:421px;width:905px;height:19px;background:linear-gradient(#c3d9dd 0px,#9dc0c7 2px,#6a9ba8 5px,#6197a4 8px,#6096a3 100%);"></div>
<svg style="left:933.5px;top:426px" width="10" height="6"><defs><linearGradient id="tg2" x1="0" y1="0" x2="0" y2="1"><stop offset="0" stop-color="#fafafa"/><stop offset="1" stop-color="#b8b8b8"/></linearGradient></defs><polygon points="0,0 9,0 4.5,5.3" fill="url(#tg2)"/></svg>
<div class="t w" style="left:947.5px;top:424.8px;font-size:10.5px;transform:scaleX(1.104);transform-origin:0 0;">Вектор атаки: Total</div>
<div class="t w" style="left:1716.8px;top:422.1px;font-size:9.5px;transform:translateX(-100%) scaleX(1.03);transform-origin:100% 0;">219.12 Mbps</div>
<div style="position:absolute;left:1721.8px;top:421.2px;width:34.2px;height:9.6px;border:1px solid #7a7a7a;background:#fff;"></div>
<div class="t" style="left:1724.6px;top:422.2px;font-size:9.5px;color:#000;">bps</div>
<svg style="left:1742.5px;top:423.2px" width="11" height="7"><path d="M1.2,1.2 L5.5,5.4 L9.8,1.2" stroke="#000" stroke-width="1.9" fill="none"/></svg>
<div style="position:absolute;left:1761.2px;top:421.2px;width:65.5px;height:9.6px;border:1px solid #7a7a7a;background:#fff;"></div>
<div class="t" style="left:1764.0px;top:422.2px;font-size:9.5px;color:#000;">входящее</div>
<svg style="left:1813.2px;top:423.2px" width="11" height="7"><path d="M1.2,1.2 L5.5,5.4 L9.8,1.2" stroke="#000" stroke-width="1.9" fill="none"/></svg>
<div class="t h" style="left:987.2px;top:447.0px;font-size:11.4px;transform:translateX(-50%);transform-origin:50% 0;">Источники</div>
<div class="t h" style="left:1141.2px;top:447.0px;font-size:11.4px;transform:translateX(-50%);transform-origin:50% 0;">Получатели</div>
<div class="t h" style="left:1293.2px;top:447.0px;font-size:11.4px;transform:translateX(-50%);transform-origin:50% 0;">Страны</div>
<div class="t h" style="left:1293.2px;top:460.2px;font-size:11.4px;transform:translateX(-50%);transform-origin:50% 0;">источника</div>
<div class="t h" style="left:1417.6px;top:447.0px;font-size:11.4px;transform:translateX(-50%);transform-origin:50% 0;">Страны</div>
<div class="t h" style="left:1417.6px;top:460.2px;font-size:11.4px;transform:translateX(-50%);transform-origin:50% 0;">получателя</div>
<div class="t h" style="left:1544.5px;top:447.0px;font-size:11.4px;transform:translateX(-50%);transform-origin:50% 0;">Протокол/порт</div>
<div class="t h" style="left:1544.5px;top:460.2px;font-size:11.4px;transform:translateX(-50%);transform-origin:50% 0;">источника</div>
<div class="t h" style="left:1670.6px;top:447.0px;font-size:11.4px;transform:translateX(-50%);transform-origin:50% 0;">Протокол/порт</div>
<div class="t h" style="left:1670.6px;top:460.2px;font-size:11.4px;transform:translateX(-50%);transform-origin:50% 0;">получателя</div>
<div class="t h" style="left:1003.6px;top:515.8px;font-size:11.4px;transform:translateX(-50%);transform-origin:50% 0;">BGP ASN</div>
<div class="t h" style="left:1003.6px;top:529.0px;font-size:11.4px;transform:translateX(-50%);transform-origin:50% 0;">источника</div>
<div class="t h" style="left:1143.1px;top:515.8px;font-size:11.4px;transform:translateX(-50%);transform-origin:50% 0;">BGP ASN</div>
<div class="t h" style="left:1143.1px;top:529.0px;font-size:11.4px;transform:translateX(-50%);transform-origin:50% 0;">получателя</div>
<div class="t h" style="left:1267.0px;top:515.8px;font-size:11.4px;transform:translateX(-50%);transform-origin:50% 0;">Размеры пакетов</div>
<div class="t h" style="left:1394.6px;top:515.8px;font-size:11.4px;transform:translateX(-50%);transform-origin:50% 0;">TCP флаги</div>
<div class="t" style="left:935.2px;top:464.8px;font-size:10.7px;"><span style="color:#123f4e">Разные:</span><span style="color:#000"> 219.12 Mbps</span></div>
<div style="position:absolute;left:1061px;top:463px;width:14px;height:9px;border:1px solid #000;border-radius:1px;background:linear-gradient(#b8b8b8 0%,#f8f8f8 12%,#e6e6e6 28%,#5aa0dc 36%,#0d5eae 52%,#3f8fd6 64%,#b02040 69%,#e41818 82%,#ff4a4a 90%,#9a0808 100%);"></div>
<div class="t" style="left:1087.6px;top:464.8px;font-size:10.7px;"><span style="color:#000">188.170.6.12</span><span style="color:#123f4e"> : </span><span style="color:#000">219.12 Mbps</span></div>
<div style="position:absolute;left:1243px;top:476px;width:14px;height:9px;border:1px solid #000;border-radius:1px;background:linear-gradient(#e9a0a0 0%,#c84a4a 18%,#e9a8a8 35%,#d06a6a 55%,#f0a0a0 72%,#c05050 88%,#f4b4b4 100%);overflow:hidden"><div style="position:absolute;left:0;top:0;width:5px;height:5px;background:linear-gradient(135deg,#1e1e7a,#7a7ad0 50%,#2a2a9a);"></div></div>
<div class="t" style="left:1266.4px;top:478.0px;font-size:10.7px;"><span style="color:#123f4e">US:</span><span style="color:#000"></span></div>
<div class="t" style="left:1287.5px;top:478.0px;font-size:10.7px;"><span style="color:#000">95.92 Mbps</span></div>
<div class="t" style="left:1243.4px;top:492.0px;font-size:10.7px;"><span style="color:#123f4e">Прочие:</span><span style="color:#000"></span></div>
<div class="t" style="left:1287.5px;top:492.0px;font-size:10.7px;"><span style="color:#000">123.2 Mbps</span></div>
<div style="position:absolute;left:1365px;top:476px;width:14px;height:9px;border:1px solid #000;border-radius:1px;background:linear-gradient(#b8b8b8 0%,#f8f8f8 12%,#e6e6e6 28%,#5aa0dc 36%,#0d5eae 52%,#3f8fd6 64%,#b02040 69%,#e41818 82%,#ff4a4a 90%,#9a0808 100%);"></div>
<div class="t" style="left:1388.3px;top:478.0px;font-size:10.7px;"><span style="color:#123f4e">RU:</span><span style="color:#000"></span></div>
<div class="t" style="left:1409.4px;top:478.0px;font-size:10.7px;"><span style="color:#000">219.12 Mbps</span></div>
<div class="t" style="left:1492.2px;top:477.7px;font-size:10.7px;"><span style="color:#123f4e">Разные:</span><span style="color:#000"> 219.12 Mbps</span></div>
<div class="t" style="left:1618.3px;top:477.7px;font-size:10.7px;"><span style="color:#123f4e">TCP/80:</span><span style="color:#000"></span></div>
<div class="t" style="left:1662.0px;top:477.7px;font-size:10.7px;"><span style="color:#000">218.71 Mbps</span></div>
<div class="t" style="left:1618.3px;top:491.5px;font-size:10.7px;"><span style="color:#123f4e">Прочие:</span><span style="color:#000"></span></div>
<div class="t" style="left:1662.0px;top:491.5px;font-size:10.7px;"><span style="color:#000">415.67 Kbps</span></div>
<div class="t" style="left:935.2px;top:547.0px;font-size:10.7px;"><span style="color:#123f4e">Не определен:</span><span style="color:#000"></span></div>
<div class="t" style="left:1011.3px;top:547.0px;font-size:10.7px;"><span style="color:#000">36.45 Mbps</span></div>
<div class="t" style="left:935.2px;top:561.0px;font-size:10.7px;"><span style="color:#123f4e">Прочие:</span><span style="color:#000"></span></div>
<div class="t" style="left:1011.3px;top:561.0px;font-size:10.7px;"><span style="color:#000">182.67 Mbps</span></div>
<div class="t" style="left:1094.2px;top:547.0px;font-size:10.7px;"><span style="color:#123f4e">25159:</span><span style="color:#000"> 219.12 Mbps</span></div>
<div class="t" style="left:1214.5px;top:534.0px;font-size:10.7px;"><span style="color:#123f4e">60 Байт:</span><span style="color:#000"></span></div>
<div class="t" style="left:1259.0px;top:534.0px;font-size:10.7px;"><span style="color:#000">218.71 Mbps</span></div>
<div class="t" style="left:1214.5px;top:548.0px;font-size:10.7px;"><span style="color:#123f4e">Прочие:</span><span style="color:#000"></span></div>
<div class="t" style="left:1259.0px;top:548.0px;font-size:10.7px;"><span style="color:#000">415.67 Kbps</span></div>
<div class="t" style="left:1342.5px;top:534.0px;font-size:10.7px;"><span style="color:#123f4e">ack:</span><span style="color:#000"></span></div>
<div class="t" style="left:1386.4px;top:534.0px;font-size:10.7px;"><span style="color:#000">124.16 Mbps</span></div>
<div class="t" style="left:1342.5px;top:548.0px;font-size:10.7px;"><span style="color:#123f4e">syn:</span><span style="color:#000"></span></div>
<div class="t" style="left:1386.4px;top:548.0px;font-size:10.7px;"><span style="color:#000">94.96 Mbps</span></div>
<div class="t" style="left:1342.5px;top:562.0px;font-size:10.7px;"><span style="color:#123f4e">Прочие:</span><span style="color:#000"></span></div>
<div class="t" style="left:1386.4px;top:562.0px;font-size:10.7px;"><span style="color:#000">1 bps</span></div>
<div style="position:absolute;left:928px;top:589px;width:905px;height:156px;border:1px solid #5e93a1;background:#eef5fd;"></div>
<div style="position:absolute;left:929px;top:590px;width:905px;height:19px;background:linear-gradient(#c3d9dd 0px,#9dc0c7 2px,#6a9ba8 5px,#6197a4 8px,#6096a3 100%);"></div>
<svg style="left:933.5px;top:595px" width="10" height="6"><defs><linearGradient id="tg2" x1="0" y1="0" x2="0" y2="1"><stop offset="0" stop-color="#fafafa"/><stop offset="1" stop-color="#b8b8b8"/></linearGradient></defs><polygon points="0,0 9,0 4.5,5.3" fill="url(#tg2)"/></svg>
<div class="t w" style="left:947.5px;top:593.8px;font-size:10.5px;transform:scaleX(1.104);transform-origin:0 0;">Вектор атаки: TCP SYN</div>
<div class="t w" style="left:1716.6px;top:591.0px;font-size:9.5px;transform:translateX(-100%) scaleX(1.03);transform-origin:100% 0;">94.96 Mbps</div>
<div style="position:absolute;left:1721.8px;top:590.2px;width:34.2px;height:9.6px;border:1px solid #7a7a7a;background:#fff;"></div>
<div class="t" style="left:1724.6px;top:591.2px;font-size:9.5px;color:#000;">bps</div>
<svg style="left:1742.5px;top:592.2px" width="11" height="7"><path d="M1.2,1.2 L5.5,5.4 L9.8,1.2" stroke="#000" stroke-width="1.9" fill="none"/></svg>
<div style="position:absolute;left:1761.2px;top:590.2px;width:65.5px;height:9.6px;border:1px solid #7a7a7a;background:#fff;"></div>
<div class="t" style="left:1764.0px;top:591.2px;font-size:9.5px;color:#000;">входящее</div>
<svg style="left:1813.2px;top:592.2px" width="11" height="7"><path d="M1.2,1.2 L5.5,5.4 L9.8,1.2" stroke="#000" stroke-width="1.9" fill="none"/></svg>
<div class="t h" style="left:984.6px;top:616.2px;font-size:11.4px;transform:translateX(-50%);transform-origin:50% 0;">Источники</div>
<div class="t h" style="left:1133.5px;top:616.2px;font-size:11.4px;transform:translateX(-50%);transform-origin:50% 0;">Получатели</div>
<div class="t h" style="left:1283.0px;top:616.2px;font-size:11.4px;transform:translateX(-50%);transform-origin:50% 0;">Страны</div>
<div class="t h" style="left:1283.0px;top:629.4px;font-size:11.4px;transform:translateX(-50%);transform-origin:50% 0;">источника</div>
<div class="t h" style="left:1405.4px;top:616.2px;font-size:11.4px;transform:translateX(-50%);transform-origin:50% 0;">Страны</div>
<div class="t h" style="left:1405.4px;top:629.4px;font-size:11.4px;transform:translateX(-50%);transform-origin:50% 0;">получателя</div>
<div class="t h" style="left:1526.8px;top:616.2px;font-size:11.4px;transform:translateX(-50%);transform-origin:50% 0;">Протокол/порт</div>
<div class="t h" style="left:1526.8px;top:629.4px;font-size:11.4px;transform:translateX(-50%);transform-origin:50% 0;">источника</div>
<div class="t h" style="left:1647.3px;top:616.2px;font-size:11.4px;transform:translateX(-50%);transform-origin:50% 0;">Протокол/порт</div>
<div class="t h" style="left:1647.3px;top:629.4px;font-size:11.4px;transform:translateX(-50%);transform-origin:50% 0;">получателя</div>
<div class="t h" style="left:1001.3px;top:685.2px;font-size:11.4px;transform:translateX(-50%);transform-origin:50% 0;">BGP ASN</div>
<div class="t h" style="left:1001.3px;top:698.4px;font-size:11.4px;transform:translateX(-50%);transform-origin:50% 0;">источника</div>
<div class="t h" style="left:1135.8px;top:685.2px;font-size:11.4px;transform:translateX(-50%);transform-origin:50% 0;">BGP ASN</div>
<div class="t h" style="left:1135.8px;top:698.4px;font-size:11.4px;transform:translateX(-50%);transform-origin:50% 0;">получателя</div>
<div class="t h" style="left:1255.0px;top:685.2px;font-size:11.4px;transform:translateX(-50%);transform-origin:50% 0;">Размеры пакетов</div>
<div class="t h" style="left:1366.5px;top:685.2px;font-size:11.4px;transform:translateX(-50%);transform-origin:50% 0;">TCP флаги</div>
<div class="t" style="left:935.4px;top:633.4px;font-size:10.7px;"><span style="color:#123f4e">Разные:</span><span style="color:#000"> 94.96 Mbps</span></div>
<div style="position:absolute;left:1056px;top:631.5px;width:14px;height:9px;border:1px solid #000;border-radius:1px;background:linear-gradient(#b8b8b8 0%,#f8f8f8 12%,#e6e6e6 28%,#5aa0dc 36%,#0d5eae 52%,#3f8fd6 64%,#b02040 69%,#e41818 82%,#ff4a4a 90%,#9a0808 100%);"></div>
<div class="t" style="left:1082.0px;top:633.4px;font-size:10.7px;"><span style="color:#000">188.170.6.12</span><span style="color:#123f4e"> : </span><span style="color:#000">94.96 Mbps</span></div>
<div style="position:absolute;left:1233.5px;top:644.5px;width:14px;height:9px;border:1px solid #000;border-radius:1px;background:linear-gradient(#e9a0a0 0%,#c84a4a 18%,#e9a8a8 35%,#d06a6a 55%,#f0a0a0 72%,#c05050 88%,#f4b4b4 100%);overflow:hidden"><div style="position:absolute;left:0;top:0;width:5px;height:5px;background:linear-gradient(135deg,#1e1e7a,#7a7ad0 50%,#2a2a9a);"></div></div>
<div class="t" style="left:1256.0px;top:646.7px;font-size:10.7px;"><span style="color:#123f4e">US:</span><span style="color:#000"></span></div>
<div class="t" style="left:1277.3px;top:646.7px;font-size:10.7px;"><span style="color:#000">47 Mbps</span></div>
<div class="t" style="left:1233.5px;top:660.8px;font-size:10.7px;"><span style="color:#123f4e">Прочие:</span><span style="color:#000"></span></div>
<div class="t" style="left:1277.3px;top:660.8px;font-size:10.7px;"><span style="color:#000">47.96 Mbps</span></div>
<div style="position:absolute;left:1355px;top:644.5px;width:14px;height:9px;border:1px solid #000;border-radius:1px;background:linear-gradient(#b8b8b8 0%,#f8f8f8 12%,#e6e6e6 28%,#5aa0dc 36%,#0d5eae 52%,#3f8fd6 64%,#b02040 69%,#e41818 82%,#ff4a4a 90%,#9a0808 100%);"></div>
<div class="t" style="left:1378.0px;top:646.7px;font-size:10.7px;"><span style="color:#123f4e">RU:</span><span style="color:#000"></span></div>
<div class="t" style="left:1399.0px;top:646.7px;font-size:10.7px;"><span style="color:#000">94.96 Mbps</span></div>
<div class="t" style="left:1477.6px;top:646.5px;font-size:10.7px;"><span style="color:#123f4e">Разные:</span><span style="color:#000"> 94.96 Mbps</span></div>
<div class="t" style="left:1598.5px;top:646.5px;font-size:10.7px;"><span style="color:#123f4e">TCP/80:</span><span style="color:#000"></span></div>
<div class="t" style="left:1640.7px;top:646.5px;font-size:10.7px;"><span style="color:#000">94.96 Mbps</span></div>
<div class="t" style="left:935.4px;top:715.8px;font-size:10.7px;"><span style="color:#123f4e">Не определен:</span><span style="color:#000"></span></div>
<div class="t" style="left:1011.7px;top:715.8px;font-size:10.7px;"><span style="color:#000">15.35 Mbps</span></div>
<div class="t" style="left:935.4px;top:729.9px;font-size:10.7px;"><span style="color:#123f4e">Прочие:</span><span style="color:#000"></span></div>
<div class="t" style="left:1011.7px;top:729.9px;font-size:10.7px;"><span style="color:#000">79.62 Mbps</span></div>
<div class="t" style="left:1089.5px;top:715.8px;font-size:10.7px;"><span style="color:#123f4e">25159:</span><span style="color:#000"> 94.96 Mbps</span></div>
<div class="t" style="left:1204.3px;top:703.3px;font-size:10.7px;"><span style="color:#123f4e">60 Байт:</span><span style="color:#000"></span></div>
<div class="t" style="left:1249.4px;top:703.3px;font-size:10.7px;"><span style="color:#000">94.96 Mbps</span></div>
<div class="t" style="left:1327.3px;top:703.3px;font-size:10.7px;"><span style="color:#123f4e">syn:</span><span style="color:#000"></span></div>
<div class="t" style="left:1350.4px;top:703.3px;font-size:10.7px;"><span style="color:#000">94.96 Mbps</span></div>
<div style="position:absolute;left:928px;top:757px;width:905px;height:156px;border:1px solid #5e93a1;background:#eef5fd;"></div>
<div style="position:absolute;left:929px;top:758px;width:905px;height:19px;background:linear-gradient(#c3d9dd 0px,#9dc0c7 2px,#6a9ba8 5px,#6197a4 8px,#6096a3 100%);"></div>
<svg style="left:933.5px;top:763px" width="10" height="6"><defs><linearGradient id="tg2" x1="0" y1="0" x2="0" y2="1"><stop offset="0" stop-color="#fafafa"/><stop offset="1" stop-color="#b8b8b8"/></linearGradient></defs><polygon points="0,0 9,0 4.5,5.3" fill="url(#tg2)"/></svg>
<div class="t w" style="left:947.5px;top:761.8px;font-size:10.5px;transform:scaleX(1.104);transform-origin:0 0;">Вектор атаки: TCP ACK</div>
<div class="t w" style="left:1716.6px;top:759.0px;font-size:9.5px;transform:translateX(-100%) scaleX(1.03);transform-origin:100% 0;">124.16 Mbps</div>
<div style="position:absolute;left:1721.8px;top:758.2px;width:34.2px;height:9.6px;border:1px solid #7a7a7a;background:#fff;"></div>
<div class="t" style="left:1724.6px;top:759.2px;font-size:9.5px;color:#000;">bps</div>
<svg style="left:1742.5px;top:760.2px" width="11" height="7"><path d="M1.2,1.2 L5.5,5.4 L9.8,1.2" stroke="#000" stroke-width="1.9" fill="none"/></svg>
<div style="position:absolute;left:1761.2px;top:758.2px;width:65.5px;height:9.6px;border:1px solid #7a7a7a;background:#fff;"></div>
<div class="t" style="left:1764.0px;top:759.2px;font-size:9.5px;color:#000;">входящее</div>
<svg style="left:1813.2px;top:760.2px" width="11" height="7"><path d="M1.2,1.2 L5.5,5.4 L9.8,1.2" stroke="#000" stroke-width="1.9" fill="none"/></svg>
<div class="t h" style="left:987.4px;top:783.5px;font-size:11.4px;transform:translateX(-50%);transform-origin:50% 0;">Источники</div>
<div class="t h" style="left:1141.3px;top:783.5px;font-size:11.4px;transform:translateX(-50%);transform-origin:50% 0;">Получатели</div>
<div class="t h" style="left:1293.4px;top:783.5px;font-size:11.4px;transform:translateX(-50%);transform-origin:50% 0;">Страны</div>
<div class="t h" style="left:1293.4px;top:796.7px;font-size:11.4px;transform:translateX(-50%);transform-origin:50% 0;">источника</div>
<div class="t h" style="left:1417.6px;top:783.5px;font-size:11.4px;transform:translateX(-50%);transform-origin:50% 0;">Страны</div>
<div class="t h" style="left:1417.6px;top:796.7px;font-size:11.4px;transform:translateX(-50%);transform-origin:50% 0;">получателя</div>
<div class="t h" style="left:1544.3px;top:783.5px;font-size:11.4px;transform:translateX(-50%);transform-origin:50% 0;">Протокол/порт</div>
<div class="t h" style="left:1544.3px;top:796.7px;font-size:11.4px;transform:translateX(-50%);transform-origin:50% 0;">источника</div>
<div class="t h" style="left:1670.5px;top:783.5px;font-size:11.4px;transform:translateX(-50%);transform-origin:50% 0;">Протокол/порт</div>
<div class="t h" style="left:1670.5px;top:796.7px;font-size:11.4px;transform:translateX(-50%);transform-origin:50% 0;">получателя</div>
<div class="t h" style="left:1003.9px;top:852.0px;font-size:11.4px;transform:translateX(-50%);transform-origin:50% 0;">BGP ASN</div>
<div class="t h" style="left:1003.9px;top:865.2px;font-size:11.4px;transform:translateX(-50%);transform-origin:50% 0;">источника</div>
<div class="t h" style="left:1143.2px;top:852.0px;font-size:11.4px;transform:translateX(-50%);transform-origin:50% 0;">BGP ASN</div>
<div class="t h" style="left:1143.2px;top:865.2px;font-size:11.4px;transform:translateX(-50%);transform-origin:50% 0;">получателя</div>
<div class="t h" style="left:1267.4px;top:852.0px;font-size:11.4px;transform:translateX(-50%);transform-origin:50% 0;">Размеры пакетов</div>
<div class="t h" style="left:1384.3px;top:852.0px;font-size:11.4px;transform:translateX(-50%);transform-origin:50% 0;">TCP флаги</div>
<div class="t" style="left:935.4px;top:800.8px;font-size:10.7px;"><span style="color:#123f4e">Разные:</span><span style="color:#000"> 124.16 Mbps</span></div>
<div style="position:absolute;left:1060.8px;top:799px;width:14px;height:9px;border:1px solid #000;border-radius:1px;background:linear-gradient(#b8b8b8 0%,#f8f8f8 12%,#e6e6e6 28%,#5aa0dc 36%,#0d5eae 52%,#3f8fd6 64%,#b02040 69%,#e41818 82%,#ff4a4a 90%,#9a0808 100%);"></div>
<div class="t" style="left:1087.4px;top:800.8px;font-size:10.7px;"><span style="color:#000">188.170.6.12</span><span style="color:#123f4e"> : </span><span style="color:#000">124.16 Mbps</span></div>
<div style="position:absolute;left:1242.8px;top:812px;width:14px;height:9px;border:1px solid #000;border-radius:1px;background:linear-gradient(#e9a0a0 0%,#c84a4a 18%,#e9a8a8 35%,#d06a6a 55%,#f0a0a0 72%,#c05050 88%,#f4b4b4 100%);overflow:hidden"><div style="position:absolute;left:0;top:0;width:5px;height:5px;background:linear-gradient(135deg,#1e1e7a,#7a7ad0 50%,#2a2a9a);"></div></div>
<div class="t" style="left:1266.0px;top:814.0px;font-size:10.7px;"><span style="color:#123f4e">US:</span><span style="color:#000"></span></div>
<div class="t" style="left:1287.5px;top:814.0px;font-size:10.7px;"><span style="color:#000">48.92 Mbps</span></div>
<div class="t" style="left:1243.3px;top:828.0px;font-size:10.7px;"><span style="color:#123f4e">Прочие:</span><span style="color:#000"></span></div>
<div class="t" style="left:1287.5px;top:828.0px;font-size:10.7px;"><span style="color:#000">75.24 Mbps</span></div>
<div style="position:absolute;left:1365px;top:812px;width:14px;height:9px;border:1px solid #000;border-radius:1px;background:linear-gradient(#b8b8b8 0%,#f8f8f8 12%,#e6e6e6 28%,#5aa0dc 36%,#0d5eae 52%,#3f8fd6 64%,#b02040 69%,#e41818 82%,#ff4a4a 90%,#9a0808 100%);"></div>
<div class="t" style="left:1388.3px;top:814.0px;font-size:10.7px;"><span style="color:#123f4e">RU:</span><span style="color:#000"></span></div>
<div class="t" style="left:1409.4px;top:814.0px;font-size:10.7px;"><span style="color:#000">124.16 Mbps</span></div>
<div class="t" style="left:1492.2px;top:814.0px;font-size:10.7px;"><span style="color:#123f4e">Разные:</span><span style="color:#000"> 124.16 Mbps</span></div>
<div class="t" style="left:1618.3px;top:814.0px;font-size:10.7px;"><span style="color:#123f4e">TCP/80:</span><span style="color:#000"></span></div>
<div class="t" style="left:1662.0px;top:814.0px;font-size:10.7px;"><span style="color:#000">123.74 Mbps</span></div>
<div class="t" style="left:1618.3px;top:828.0px;font-size:10.7px;"><span style="color:#123f4e">Прочие:</span><span style="color:#000"></span></div>
<div class="t" style="left:1662.0px;top:828.0px;font-size:10.7px;"><span style="color:#000">415.67 Kbps</span></div>
<div class="t" style="left:935.4px;top:883.0px;font-size:10.7px;"><span style="color:#123f4e">Не определен:</span><span style="color:#000"></span></div>
<div class="t" style="left:1011.7px;top:883.0px;font-size:10.7px;"><span style="color:#000">21.1 Mbps</span></div>
<div class="t" style="left:935.4px;top:897.0px;font-size:10.7px;"><span style="color:#123f4e">Прочие:</span><span style="color:#000"></span></div>
<div class="t" style="left:1011.7px;top:897.0px;font-size:10.7px;"><span style="color:#000">103.05 Mbps</span></div>
<div class="t" style="left:1094.5px;top:883.0px;font-size:10.7px;"><span style="color:#123f4e">25159:</span><span style="color:#000"> 124.16 Mbps</span></div>
<div class="t" style="left:1214.4px;top:870.0px;font-size:10.7px;"><span style="color:#123f4e">60 Байт:</span><span style="color:#000"></span></div>
<div class="t" style="left:1259.0px;top:870.0px;font-size:10.7px;"><span style="color:#000">123.74 Mbps</span></div>
<div class="t" style="left:1214.4px;top:884.0px;font-size:10.7px;"><span style="color:#123f4e">Прочие:</span><span style="color:#000"></span></div>
<div class="t" style="left:1259.0px;top:884.0px;font-size:10.7px;"><span style="color:#000">415.67 Kbps</span></div>
<div class="t" style="left:1342.4px;top:870.0px;font-size:10.7px;"><span style="color:#123f4e">ack:</span><span style="color:#000"></span></div>
<div class="t" style="left:1365.5px;top:870.0px;font-size:10.7px;"><span style="color:#000">124.16 Mbps</span></div></body></html>
